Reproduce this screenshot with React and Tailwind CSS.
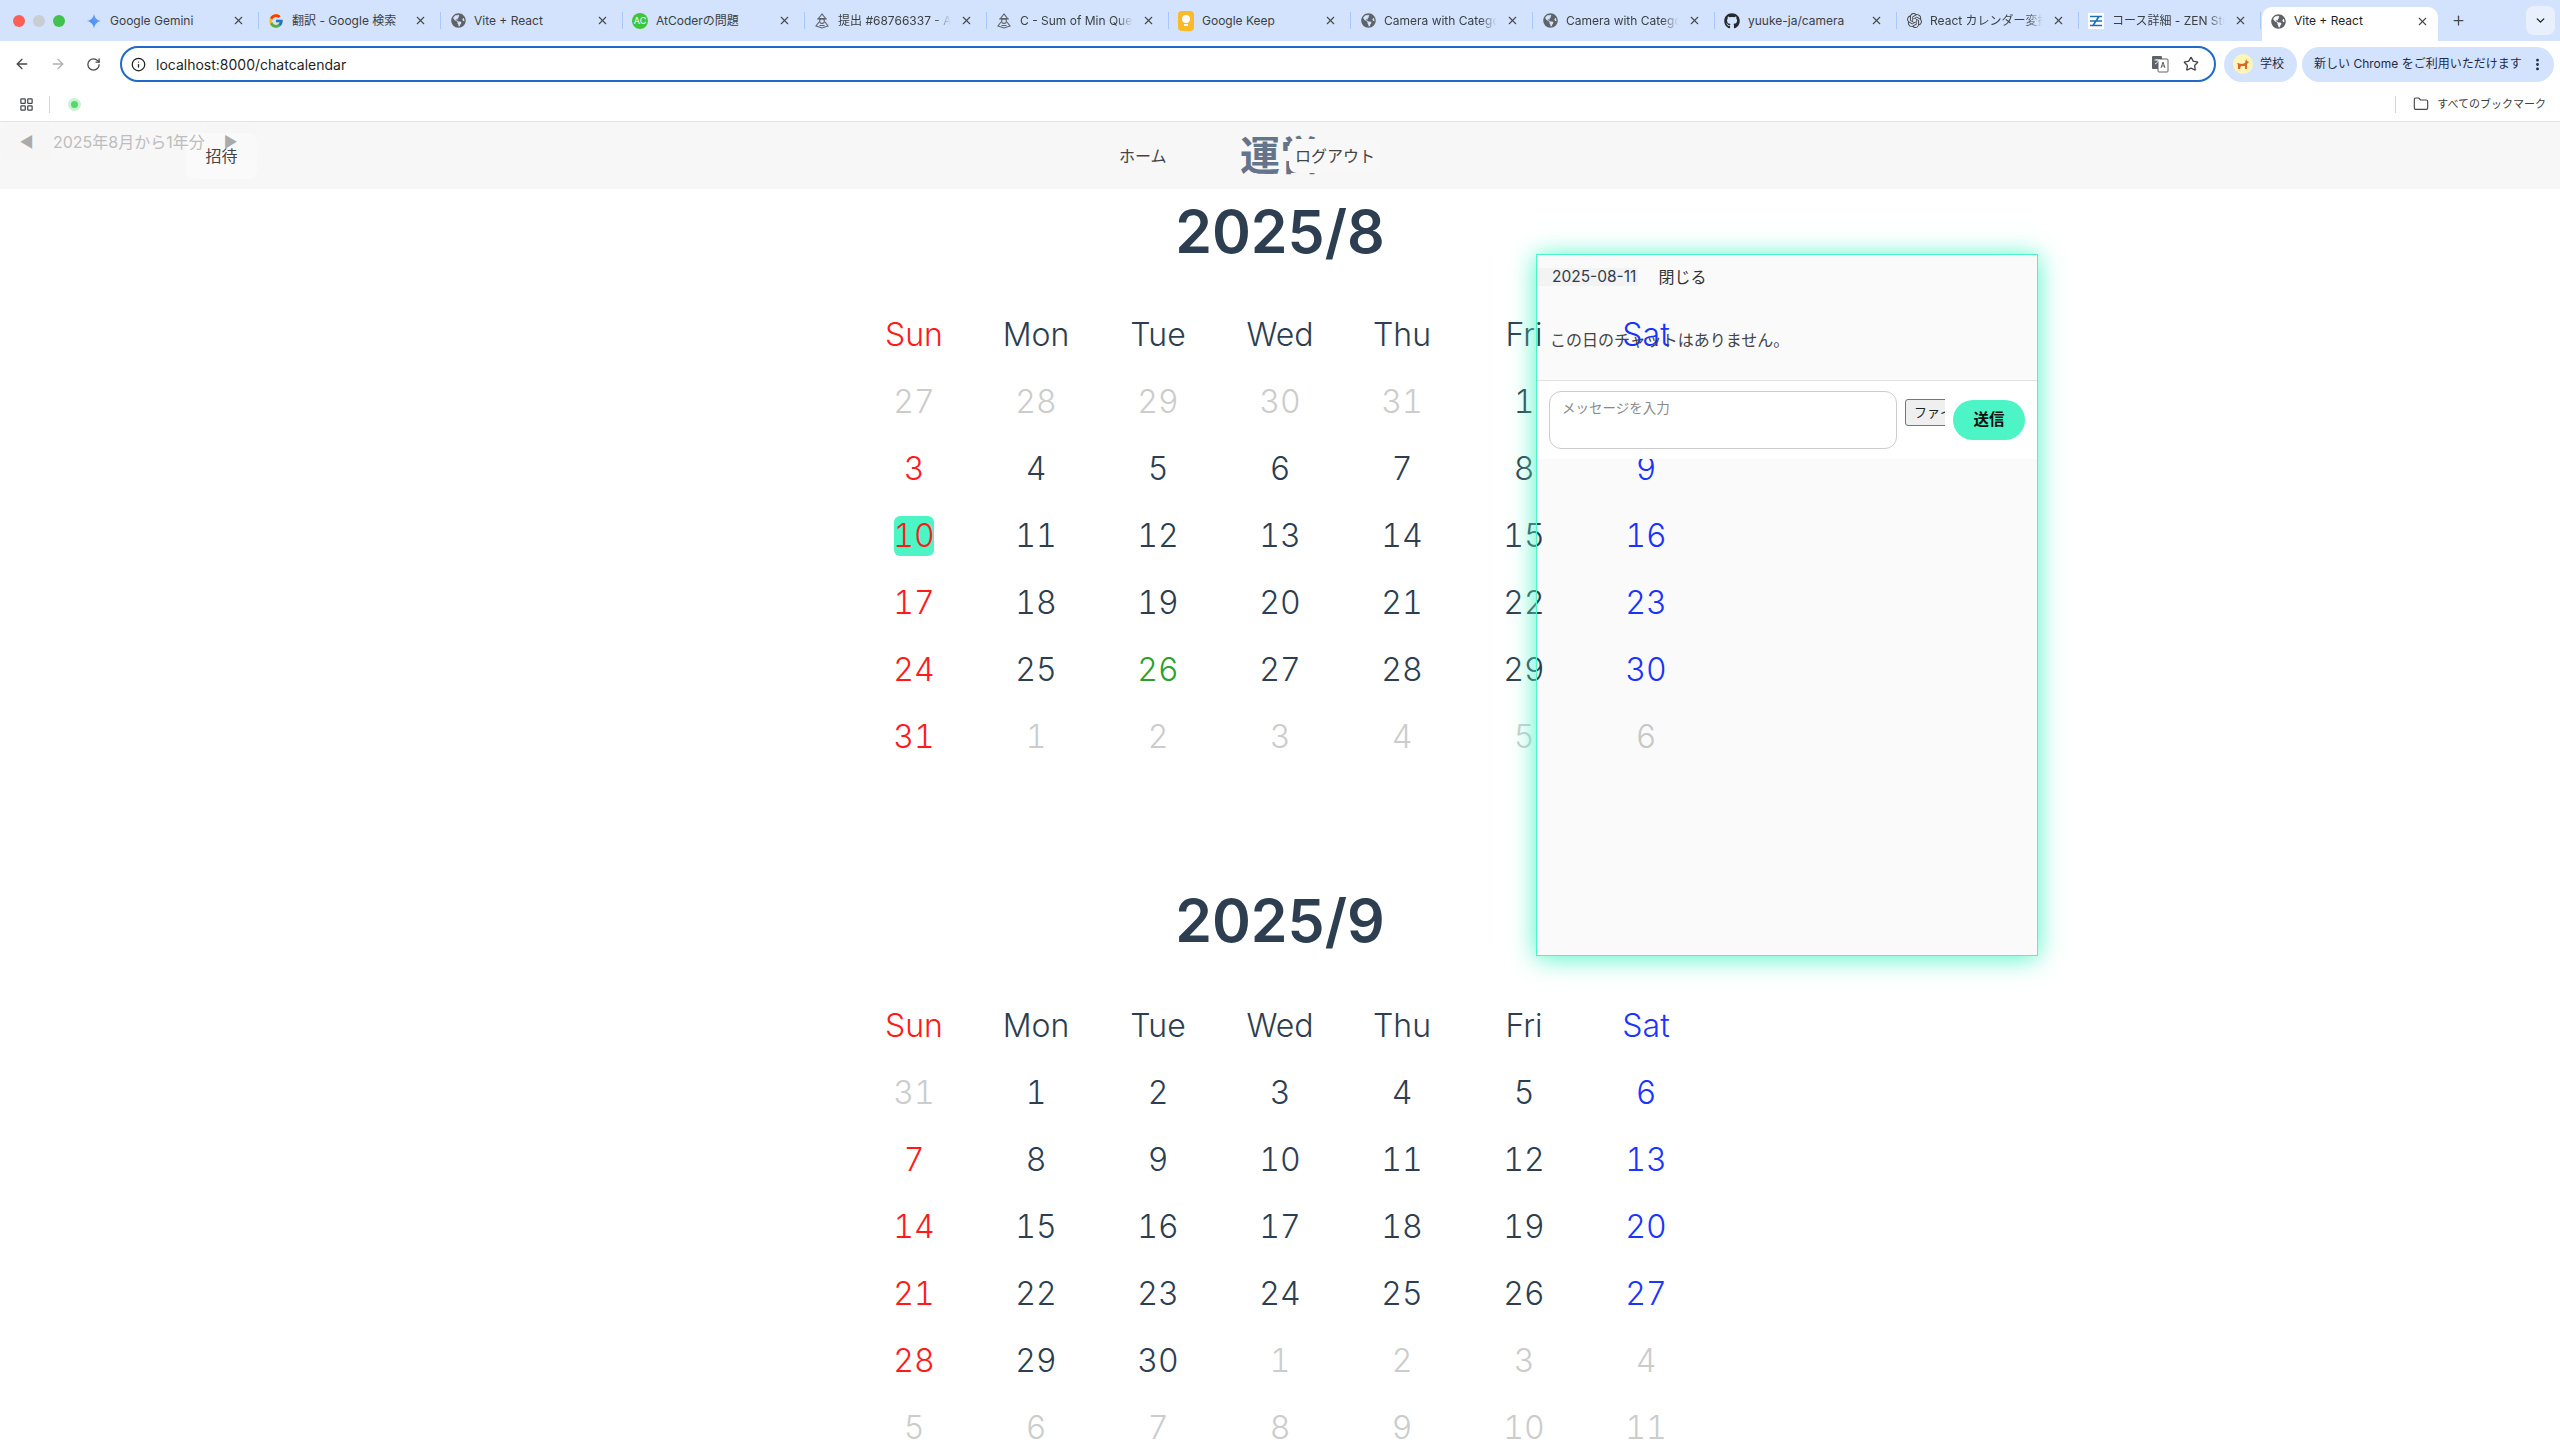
import React from "react";
import { ArrowLeft, ArrowRight, RotateCw, Info, Star, X, Plus, ChevronDown, EllipsisVertical, Folder, LayoutGrid } from "lucide-react";
import { FaGithub, FaGlobeAmericas } from "react-icons/fa";
import { FcGoogle } from "react-icons/fc";
import { SiOpenai } from "react-icons/si";

const GeminiIcon = () => (
  <svg width="16" height="16" viewBox="0 0 24 24">
    <defs>
      <linearGradient id="gem" x1="0" y1="1" x2="1" y2="0">
        <stop offset="0" stopColor="#3b82f6" />
        <stop offset="0.6" stopColor="#5b9cf5" />
        <stop offset="1" stopColor="#e8716a" />
      </linearGradient>
    </defs>
    <path d="M12 1c1 6 4.500 10 11 11-6.500 1-10 5-11 11-1-6-4.500-10-11-11 6.500-1 10-5 11-11z" fill="url(#gem)" />
  </svg>
);

const AcIcon = () => (
  <div className="w-4 h-4 rounded-full bg-[#3ec53e] flex items-center justify-center text-white text-[9px] leading-none">AC</div>
);

const AtCoderIcon = () => (
  <svg width="16" height="16" viewBox="0 0 16 16" fill="none" stroke="#5f6368" strokeWidth="1.1">
    <path d="M8 1 4.500 5.500h7zM3 6h10" />
    <circle cx="8" cy="8" r="2.400" />
    <path d="M5 9 2 13l6 2 6-2-3-4M5.500 12.500h5" />
  </svg>
);

const KeepIcon = () => (
  <div className="w-4 h-5 rounded-sm bg-[#fbb829] flex flex-col items-center justify-center">
    <div className="w-[8px] h-[8px] rounded-full bg-white" />
    <div className="w-[4px] h-[2px] mt-[1px] bg-white" />
  </div>
);

const ZenIcon = () => (
  <div className="w-4 h-4 bg-white flex items-center justify-center">
    <svg width="14" height="14" viewBox="0 0 14 14" stroke="#1d6fb8" strokeWidth="1.600" fill="none">
      <path d="M1 2.500h12M10 2.500 4 11.500M1 11.500h12M1 7h12" />
    </svg>
  </div>
);

const globe = <FaGlobeAmericas className="text-[#5f6368]" size={15} />;

const TABS = [
  { title: "Google Gemini", icon: <GeminiIcon /> },
  { title: "翻訳 - Google 検索", icon: <FcGoogle size={16} /> },
  { title: "Vite + React", icon: globe },
  { title: "AtCoderの問題", icon: <AcIcon /> },
  { title: "提出 #68766337 - AtCoder", icon: <AtCoderIcon />, fade: true },
  { title: "C - Sum of Min Query", icon: <AtCoderIcon />, fade: true },
  { title: "Google Keep", icon: <KeepIcon /> },
  { title: "Camera with Category", icon: globe, fade: true },
  { title: "Camera with Category", icon: globe, fade: true },
  { title: "yuuke-ja/camera", icon: <FaGithub className="text-[#24292f]" size={16} /> },
  { title: "React カレンダー変換の方法", icon: <SiOpenai className="text-[#444]" size={15} />, fade: true },
  { title: "コース詳細 - ZEN Study", icon: <ZenIcon />, fade: true },
];

const Tab = ({ title, icon, fade }) => (
  <div className="w-[182px] h-[41px] shrink-0 flex items-center relative">
    <div className="w-4 ml-[9px] flex justify-center shrink-0">{icon}</div>
    <div
      className={
        "ml-[8px] w-[113px] overflow-hidden whitespace-nowrap text-[12px] text-[#3c4043] " +
        (fade ? "[mask-image:linear-gradient(to_right,black_85%,transparent)]" : "")
      }
    >
      {title}
    </div>
    <X className="ml-[9px] text-[#45474a]" size={13} strokeWidth={2} />
    <div className="absolute left-[181px] top-[12px] w-px h-[17px] bg-[#a8c7fa]" />
  </div>
);

const TabBar = () => (
  <div className="h-[41px] bg-[#d3e3fd] flex items-center relative">
    <div className="w-[77px] flex items-center gap-[8px] pl-[13px] shrink-0">
      <div className="w-3 h-3 rounded-full bg-[#ff5f57] shrink-0" />
      <div className="w-3 h-3 rounded-full bg-[#c9ccd3] shrink-0" />
      <div className="w-3 h-3 rounded-full bg-[#3fc34e] shrink-0" />
    </div>
    <div className="flex">
      {TABS.map((t, i) => (
        <Tab key={i} {...t} />
      ))}
    </div>
    <div className="w-[176px] h-[34px] mt-[7px] ml-[1px] pb-[6px] bg-white rounded-t-[10px] flex items-center shrink-0">
      <div className="ml-[8px] w-4 flex justify-center">{globe}</div>
      <div className="ml-[8px] text-[12px] text-[#1f1f1f] w-[113px]">Vite + React</div>
      <X className="ml-[9px] text-[#45474a]" size={13} strokeWidth={2} />
    </div>
    <Plus className="ml-[13px] text-[#45474a]" size={15} strokeWidth={2} />
    <div className="ml-[60px] w-[29px] h-[29px] mt-[-1px] rounded-lg bg-[#e8f0fe] flex items-center justify-center">
      <ChevronDown className="text-[#1f1f1f]" size={13} strokeWidth={2.500} />
    </div>
  </div>
);

const TranslateIcon = () => (
  <svg width="18" height="18" viewBox="0 0 18 18">
    <rect x="1" y="1" width="10" height="13" rx="1" fill="#5f6368" />
    <rect x="7" y="4" width="10" height="13" rx="1" fill="#fff" stroke="#5f6368" />
    <path d="M3.500 5h5M6 4v1M4 9c2-1 3-2 3.500-4" stroke="#fff" strokeWidth="1" fill="none" />
    <path d="M10 13l2-6 2 6M10.800 11h2.400" stroke="#5f6368" strokeWidth="1" fill="none" />
  </svg>
);

const ProfileIcon = () => (
  <svg width="20" height="20" viewBox="0 0 20 20">
    <circle cx="10" cy="10" r="10" fill="#fdf6b8" />
    <path d="M4 9l5 1 3-1 1-4 1 2 2 1-2 2v5h-2v-3H8l-1 3H5v-4z" fill="#d9672a" />
  </svg>
);

const NavBar = () => (
  <div className="h-[46px] bg-white flex items-center">
    <div className="w-[120px] flex items-center pl-[14px] gap-[20px] shrink-0 mt-[0px]">
      <ArrowLeft className="text-[#45474a]" size={16} strokeWidth={2} />
      <ArrowRight className="text-[#b0b1b3]" size={16} strokeWidth={2} />
      <RotateCw className="text-[#45474a]" size={15} strokeWidth={2} />
    </div>
    <div className="w-[2096px] h-[36px] border-2 border-[#1f69c9] rounded-full flex items-center pl-[9px] pr-[15px] shrink-0">
      <Info className="text-[#1f1f1f]" size={15} strokeWidth={2} />
      <span className="ml-[10px] text-[14px] text-[#1f1f1f]">localhost:8000/chatcalendar</span>
      <div className="ml-auto flex items-center gap-[14px]">
        <TranslateIcon />
        <Star className="text-[#45474a]" size={16} strokeWidth={2} />
      </div>
    </div>
    <div className="ml-[8px] w-[73px] h-[35px] rounded-full bg-[#d3e3fd] flex items-center pl-[9px] shrink-0">
      <ProfileIcon />
      <span className="ml-[7px] text-[12px] text-[#1f2a44]">学校</span>
    </div>
    <div className="ml-[5px] w-[252px] h-[35px] rounded-full bg-[#d3e3fd] flex items-center pl-[12px] shrink-0">
      <span className="text-[12px] text-[#1f2a44] whitespace-nowrap">新しい Chrome をご利用いただけます</span>
      <EllipsisVertical className="ml-auto mr-[9px] text-[#1f2a44]" size={15} strokeWidth={2.500} />
    </div>
  </div>
);

const BookmarkBar = () => (
  <div className="h-[35px] bg-white border-b border-[#e3e3e3] flex items-center">
    <LayoutGrid className="ml-[19px] text-[#45474a]" size={15} strokeWidth={2} />
    <div className="ml-[15px] w-px h-[17px] bg-[#c5d6f0]" />
    <div className="ml-[21px] w-[7px] h-[7px] rounded-full bg-[#55d96f] ring-[3px] ring-[#c9f3d4]" />
    <div className="ml-auto w-px h-[17px] bg-[#c5d6f0]" />
    <Folder className="ml-[17px] text-[#45474a]" size={16} strokeWidth={1.700} />
    <span className="ml-[8px] mr-[14px] text-[11px] text-[#3c4043] whitespace-nowrap">すべてのブックマーク</span>
  </div>
);

const AppHeader = () => (
  <div className="h-[67px] bg-[#f7f7f7] relative">
    <div className="absolute left-[186px] top-[11px] w-[71px] h-[46px] rounded-lg bg-[#fafafa] flex items-center justify-center text-[16px] text-[#444]">
      招待
    </div>
    {/* month pager, lies over the invite button */}
    <div className="absolute left-0 top-[1px] h-[38px] flex items-center text-[#bdbdbd]">
      <div className="w-[53px] h-[38px] rounded-lg bg-black/[0.005] flex items-center justify-center text-[#aaa] text-[15px]">◀</div>
      <span className="text-[16px] whitespace-nowrap w-[151px]">2025年8月から1年分</span>
      <div className="w-[53px] h-[38px] rounded-lg bg-black/[0.005] flex items-center justify-center text-[#aaa] text-[15px]">▶</div>
    </div>
    <div className="absolute left-[1119px] top-[22px] text-[16px] leading-[24px] text-[#444]">ホーム</div>
    <div className="absolute left-[1240px] top-[10px] text-[40px] leading-[48px] font-bold text-[#64748b] whitespace-nowrap">運営</div>
    <div className="absolute left-[1289px] top-[17px] w-[92px] h-[34px] rounded-lg bg-[#f8f8f8] flex items-center justify-center text-[16px] text-[#444]">
      ログアウト
    </div>
  </div>
);

const WEEK = ["Sun", "Mon", "Tue", "Wed", "Thu", "Fri", "Sat"];

const AUGUST = [
  27, 28, 29, 30, 31, 1, 2, 3, 4, 5, 6, 7, 8, 9, 10, 11, 12, 13, 14, 15, 16, 17, 18, 19, 20, 21, 22, 23, 24, 25, 26, 27, 28, 29, 30, 31, 1, 2, 3, 4, 5, 6,
];
const SEPTEMBER = [
  31, 1, 2, 3, 4, 5, 6, 7, 8, 9, 10, 11, 12, 13, 14, 15, 16, 17, 18, 19, 20, 21, 22, 23, 24, 25, 26, 27, 28, 29, 30, 1, 2, 3, 4, 5, 6, 7, 8, 9, 10, 11,
];

const dayColor = (col, muted, holiday) => {
  if (muted) return "text-[#cccccc]";
  if (holiday) return "text-[#2ca02c]";
  if (col === 0) return "text-[#ff1a1a]";
  if (col === 6) return "text-[#1a35ff]";
  return "text-[#2c3e50]";
};

const Month = ({ title, days, firstIn, lastIn, today, holiday, className, weekGap }) => (
  <div className={"w-[854px] " + className}>
    <h2 className="text-[59px] leading-[80px] font-semibold text-[#2c3e50] text-center">{title}</h2>
    <div className={"grid grid-cols-7 h-[66px] items-center text-center text-[32px] font-light " + weekGap}>
      {WEEK.map((d, i) => (
        <div key={d} className={dayColor(i)}>
          {d}
        </div>
      ))}
    </div>
    <div className="grid grid-cols-7 auto-rows-[67px] items-center justify-items-center text-[32px] font-light tabular-nums">
      {days.map((d, i) => {
        const muted = i < firstIn || i > lastIn;
        return (
          <div
            key={i}
            className={
              "flex items-center justify-center h-[40px] w-[40px] rounded-md leading-none " +
              dayColor(i % 7, muted, i === holiday) +
              (i === today ? " bg-[#4df4c6]" : "")
            }
          >
            {d}
          </div>
        );
      })}
    </div>
  </div>
);

const ChatPanel = () => (
  <div className="absolute left-[1536px] top-[254px] w-[502px] h-[702px] border border-[#4df4c6] bg-black/[0.02] shadow-[0_2px_24px_#4df4c6] flex flex-col">
    <div className="h-[125px] shrink-0">
      <div className="flex items-start">
        <div className="mt-[13px] w-[101px] h-[18px] bg-[#f3f3f3] flex items-center pl-[15px] text-[15.500px] text-[#2c3e50] whitespace-nowrap">2025-08-11</div>
        <div className="mt-0 w-[89px] h-[43px] rounded-lg bg-[#fafafa] flex items-center justify-center text-[16px] text-[#333]">閉じる</div>
      </div>
      <p className="ml-[13px] mt-[30px] text-[16px] leading-[24px] text-[#444]">この日のチャットはありません。</p>
    </div>
    <div className="h-[79px] shrink-0 bg-white border-t border-[#e3e3e3] flex items-start pl-[12px]">
      <textarea
        placeholder="メッセージを入力"
        className="mt-[10px] w-[348px] h-[58px] resize-none rounded-xl border border-[#cccccc] bg-white px-[12px] py-[6px] text-[13.500px] leading-[20px] outline-none placeholder:text-[#8a8a8a]"
      />
      <div className="mt-[18px] ml-[8px] w-[40px] overflow-hidden">
        <div className="w-[120px] h-[27px] rounded-[3px] border border-[#767676] bg-[#efefef] pl-[8px] text-[13px] leading-[24px] text-[#222] whitespace-nowrap">ファイルを選択</div>
      </div>
      <button className="mt-[19px] ml-[8px] w-[72px] h-[40px] rounded-full bg-[#4df4c6] text-[15.500px] font-semibold text-[#111]">送信</button>
    </div>
  </div>
);

export default function App() {
  return (
    <div className="h-screen overflow-hidden bg-white relative font-['Inter','Noto_Sans_CJK_JP',sans-serif]">
      <TabBar />
      <NavBar />
      <BookmarkBar />
      <AppHeader />
      <div className="flex flex-col items-center">
        <Month title="2025/8" days={AUGUST} firstIn={5} lastIn={35} today={14} holiday={30} className="mt-[3px]" weekGap="mt-[30px]" />
        <Month title="2025/9" days={SEPTEMBER} firstIn={1} lastIn={30} className="mt-[111px]" weekGap="mt-[32px]" />
      </div>
      <ChatPanel />
    </div>
  );
}
